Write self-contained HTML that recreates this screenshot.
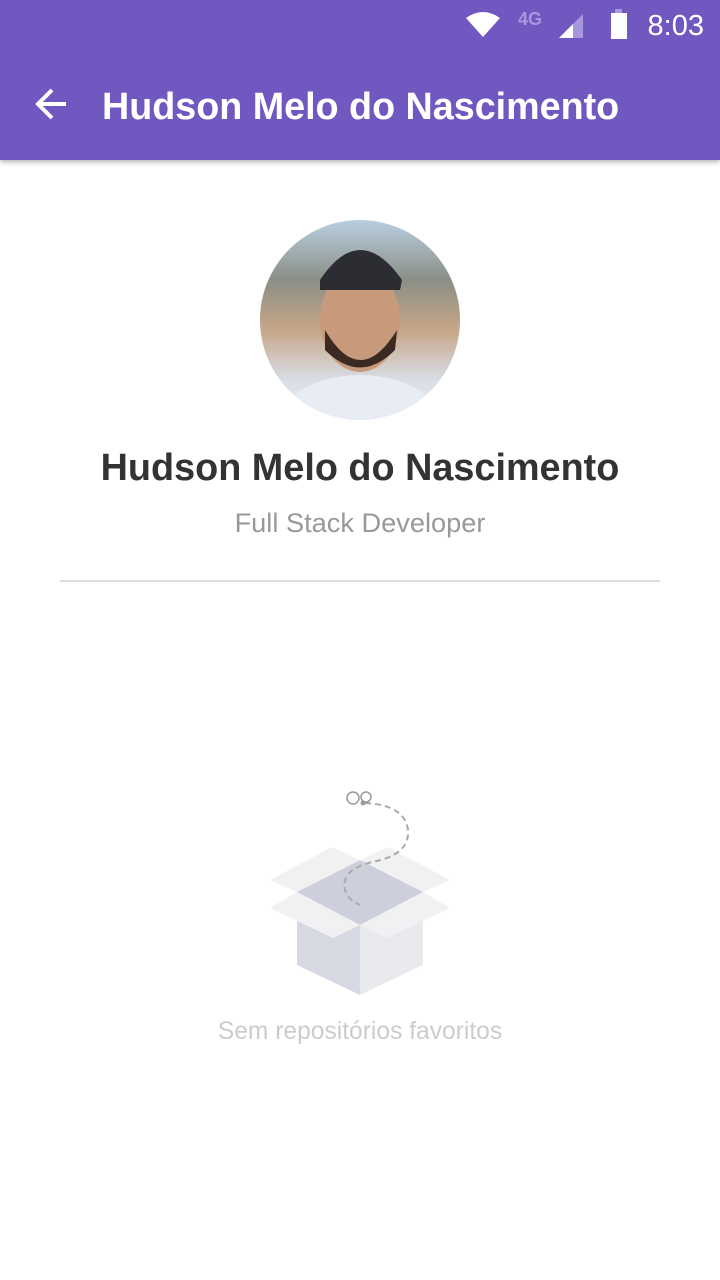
<!DOCTYPE html>
<html><head><style>
body{margin:0;width:720px;height:1280px;background:#fff;font-family:"Liberation Sans",sans-serif;overflow:hidden;position:relative}
.bar{position:absolute;top:0;left:0;width:720px;height:160px;background:#7157c0;box-shadow:0 2px 5px rgba(0,0,0,.3)}
.title{position:absolute;left:102px;top:84px;color:#fff;font-size:37.7px;font-weight:bold;line-height:44px}
.time{position:absolute;right:16px;top:8px;color:#fff;font-size:29px;line-height:36px}
.av{position:absolute;left:260px;top:220px;width:200px;height:200px;border-radius:50%;overflow:hidden;background:linear-gradient(180deg,#b9cfe0 0%,#8a8f86 30%,#c7a688 55%,#d9dde6 80%,#eef0f5 100%)}
.name{position:absolute;top:447px;width:720px;text-align:center;font-size:37.8px;font-weight:bold;color:#333}
.sub{position:absolute;top:507px;width:720px;text-align:center;font-size:27.2px;color:#999}
.hr{position:absolute;left:60px;top:580px;width:600px;height:2px;background:#ddd}
.empty{position:absolute;top:1018px;width:720px;text-align:center;font-size:24.6px;color:#ccc}
</style></head><body>
<div class="bar">
<svg style="position:absolute;left:0;top:0" width="720" height="160">
<path d="M466 18 Q483 6 500 18 L483 37 Z" fill="#fff"/>
<text x="518" y="25" font-size="18" fill="#a797dc" font-family="Liberation Sans" font-weight="bold">4G</text>
<path d="M559 38 L583 14 L583 38 Z" fill="#a797dc"/><path d="M559 38 L573 24 L573 38 Z" fill="#fff"/>
<rect x="615" y="9" width="7" height="4" fill="#a797dc"/><rect x="611" y="13" width="16" height="26" fill="#fff"/>
<path d="M66 104 H38 M52 90 L38 104 L52 118" stroke="#fff" stroke-width="4" fill="none"/>
</svg>
<div class="time">8:03</div>
<div class="title">Hudson Melo do Nascimento</div>
</div>
<div class="av"><svg width="200" height="200"><ellipse cx="100" cy="210" rx="85" ry="55" fill="#e8ecf3"/><ellipse cx="100" cy="100" rx="40" ry="52" fill="#c89a7c"/><path d="M60 60 Q100 0 142 60 L140 70 L60 70Z" fill="#2b2d33"/><path d="M65 110 Q100 170 137 110 L135 130 Q100 165 65 130Z" fill="#3a2a22"/></svg></div>
<div class="name">Hudson Melo do Nascimento</div>
<div class="sub">Full Stack Developer</div>
<div class="hr"></div>
<svg style="position:absolute;left:0;top:0" width="720" height="1010">
<polygon points="297,892 360,925 360,995 297,965" fill="#d6d9e1"/>
<polygon points="360,925 423,892 423,965 360,995" fill="#e9eaee"/>
<polygon points="297,892 360,860 423,892 360,925" fill="#cdd0db"/>
<polygon points="270,880 332,847 360,860 297,892" fill="#f1f1f3"/>
<polygon points="450,880 388,847 360,860 423,892" fill="#f1f1f3"/>
<polygon points="270,908 297,892 360,925 333,938" fill="#f1f1f3"/>
<polygon points="450,908 423,892 360,925 387,938" fill="#f1f1f3"/>
<path d="M365 803 Q405 805 408 830 Q410 855 372 862 Q340 870 345 890 Q348 900 360 905" stroke="#aaa" stroke-width="2" stroke-dasharray="6 4" fill="none"/>
<circle cx="353" cy="798" r="6" fill="none" stroke="#999" stroke-width="1.5"/>
<circle cx="366" cy="797" r="5" fill="none" stroke="#999" stroke-width="1.5"/>
<circle cx="363" cy="803" r="2.5" fill="#999"/>
</svg>
<div class="empty">Sem repositórios favoritos</div>
</body></html>
